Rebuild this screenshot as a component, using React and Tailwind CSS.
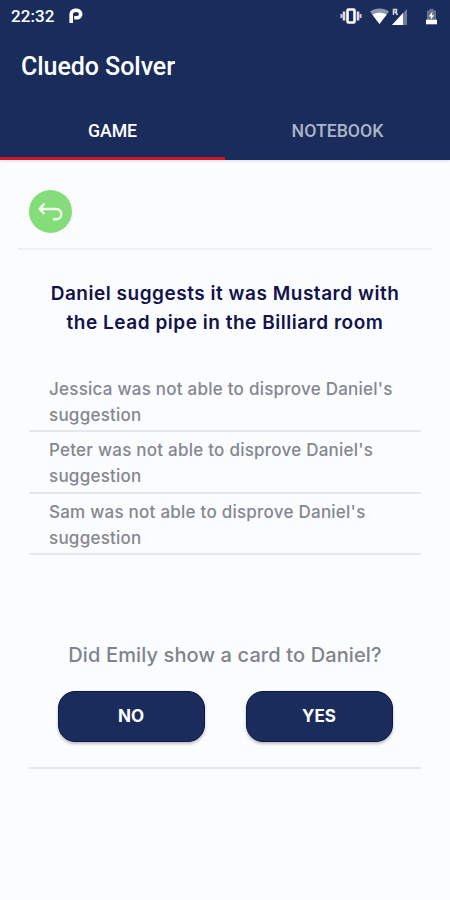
const answers = ["Jessica", "Peter", "Sam"]

const StatusBar = () => {
  return (
    <div className="flex h-8 items-center justify-between pl-[11px] pr-[13px] text-white">
      <div className="flex items-center gap-[14px]">
        <span className="text-[17px] font-medium leading-8 tracking-[0.1px]">22:32</span>
        <svg width="14" height="16" viewBox="0 0 14 16" fill="none">
          <path
            d="M2.2 15V6.2A3.8 3.8 0 0 1 6 2.4H8A3.7 3.7 0 0 1 8 9.8H5.2"
            stroke="currentColor"
            strokeWidth="3.6"
          />
          <circle cx="7" cy="6" r="1.8" fill="#1a2c5b" />
        </svg>
      </div>
      <div className="flex items-center">
        <svg width="22" height="18" viewBox="0 0 22 18" fill="none">
          <rect x="7.5" y="2.5" width="7" height="13" rx="1" stroke="currentColor" strokeWidth="2.6" />
          <path d="M4 4.5V13.5M18 4.5V13.5" stroke="currentColor" strokeWidth="2.6" opacity="0.85" />
          <path d="M1.4 7V11M20.6 7V11" stroke="currentColor" strokeWidth="2" opacity="0.75" />
        </svg>
        <svg className="ml-2" width="19" height="16" viewBox="0 0 19 16">
          <path d="M0 3.6C5.5-.6 13.5-.6 19 3.6L9.5 16Z" fill="#8d97b0" />
          <path d="M2.3 6.6C6.8 4 12.2 4 16.7 6.6L9.5 16Z" fill="currentColor" />
        </svg>
        <svg className="ml-[3px]" width="15" height="17" viewBox="0 0 15 17">
          <path d="M15 1V17H0Z" fill="#6f7b9a" />
          <path d="M11 5V17H0Z" fill="currentColor" />
          <path d="M1.5 7V1.5H4.5V4H1.5M3.5 4L5.5 7" stroke="#d5d9e3" strokeWidth="1.5" fill="none" />
        </svg>
        <svg className="ml-[19px]" width="11" height="17" viewBox="0 0 12 17">
          <path d="M4 0H8V2H11V12H1V2H4Z" fill="#66728f" />
          <path d="M0 12H12V17H0Z" fill="currentColor" />
          <path d="M7 3L3 8.5H5.5L5 12L9 7H6.5Z" fill="currentColor" />
        </svg>
      </div>
    </div>
  )
}

const Header = () => {
  return (
    <header className="h-40 bg-[#1a2c5b] font-[Roboto,sans-serif] shadow-[0_1px_3px_rgba(26,44,91,0.15)]">
      <StatusBar />
      <h1 className="flex h-[70px] items-center pl-[21px] text-[25px] font-medium leading-[30px] tracking-[-0.05px] text-white">
        Cluedo Solver
      </h1>
      <nav className="grid h-[58px] grid-cols-2 text-center text-[17.7px] font-medium">
        <div className="h-[58px] border-b-[3px] border-[#ce1626] leading-[58px] text-white">GAME</div>
        <div className="leading-[58px] text-[#adb4c6]">NOTEBOOK</div>
      </nav>
    </header>
  )
}

const Button = ({ children }) => {
  return (
    <button className="h-[51px] w-[147px] rounded-[17px] border border-[#0b174b] bg-[#1a2c5b] text-[17px] font-bold text-white shadow-[0_2px_3px_rgba(0,0,0,0.25)]">
      {children}
    </button>
  )
}

const App = () => {
  return (
    <div className="h-[900px] w-[450px] overflow-hidden bg-[#fbfcfe] font-[Inter,sans-serif]">
      <Header />
      <main>
        <div className="mx-[18px] h-[90px] border-b-2 border-[#eeeff1] pl-[11px] pt-[30px]">
          <button className="flex size-[43px] items-center justify-center rounded-full bg-[#83dd78]">
            <svg width="25" height="20" viewBox="0 0 25 20" fill="none" stroke="#f4fff2" strokeWidth="2.4">
              <path d="M6.5 1.5L1.7 7L6.5 12M2 7H18C25 7 25 17.3 18 17.3H15" />
            </svg>
          </button>
        </div>
        <h2 className="mt-[29px] text-center text-[19px] font-semibold leading-[29px] tracking-[0.52px] text-[#11134a]">
          Daniel suggests it was Mustard with
          <br />
          the Lead pipe in the Billiard room
        </h2>
        <ul className="mx-[29px] mt-[34px]">
          {answers.map((name) => (
            <li
              key={name}
              className="h-[61.3px] border-b-2 border-[#e5e7ea] pl-5 pt-[5px] text-[17px] font-medium leading-[26px] tracking-[0.24px] text-[#848790]"
            >
              {name} was not able to disprove Daniel's
              <br />
              suggestion
            </li>
          ))}
        </ul>
        <section className="mx-[29px] mt-[85px] border-b-2 border-[#e5e7ea] pb-[25px]">
          <p className="text-center text-[20px] font-medium leading-[30px] tracking-[0.12px] text-[#80838d]">
            Did Emily show a card to Daniel?
          </p>
          <div className="mt-[21px] flex justify-center gap-[41px]">
            <Button>NO</Button>
            <Button>YES</Button>
          </div>
        </section>
      </main>
    </div>
  )
}

export default App
